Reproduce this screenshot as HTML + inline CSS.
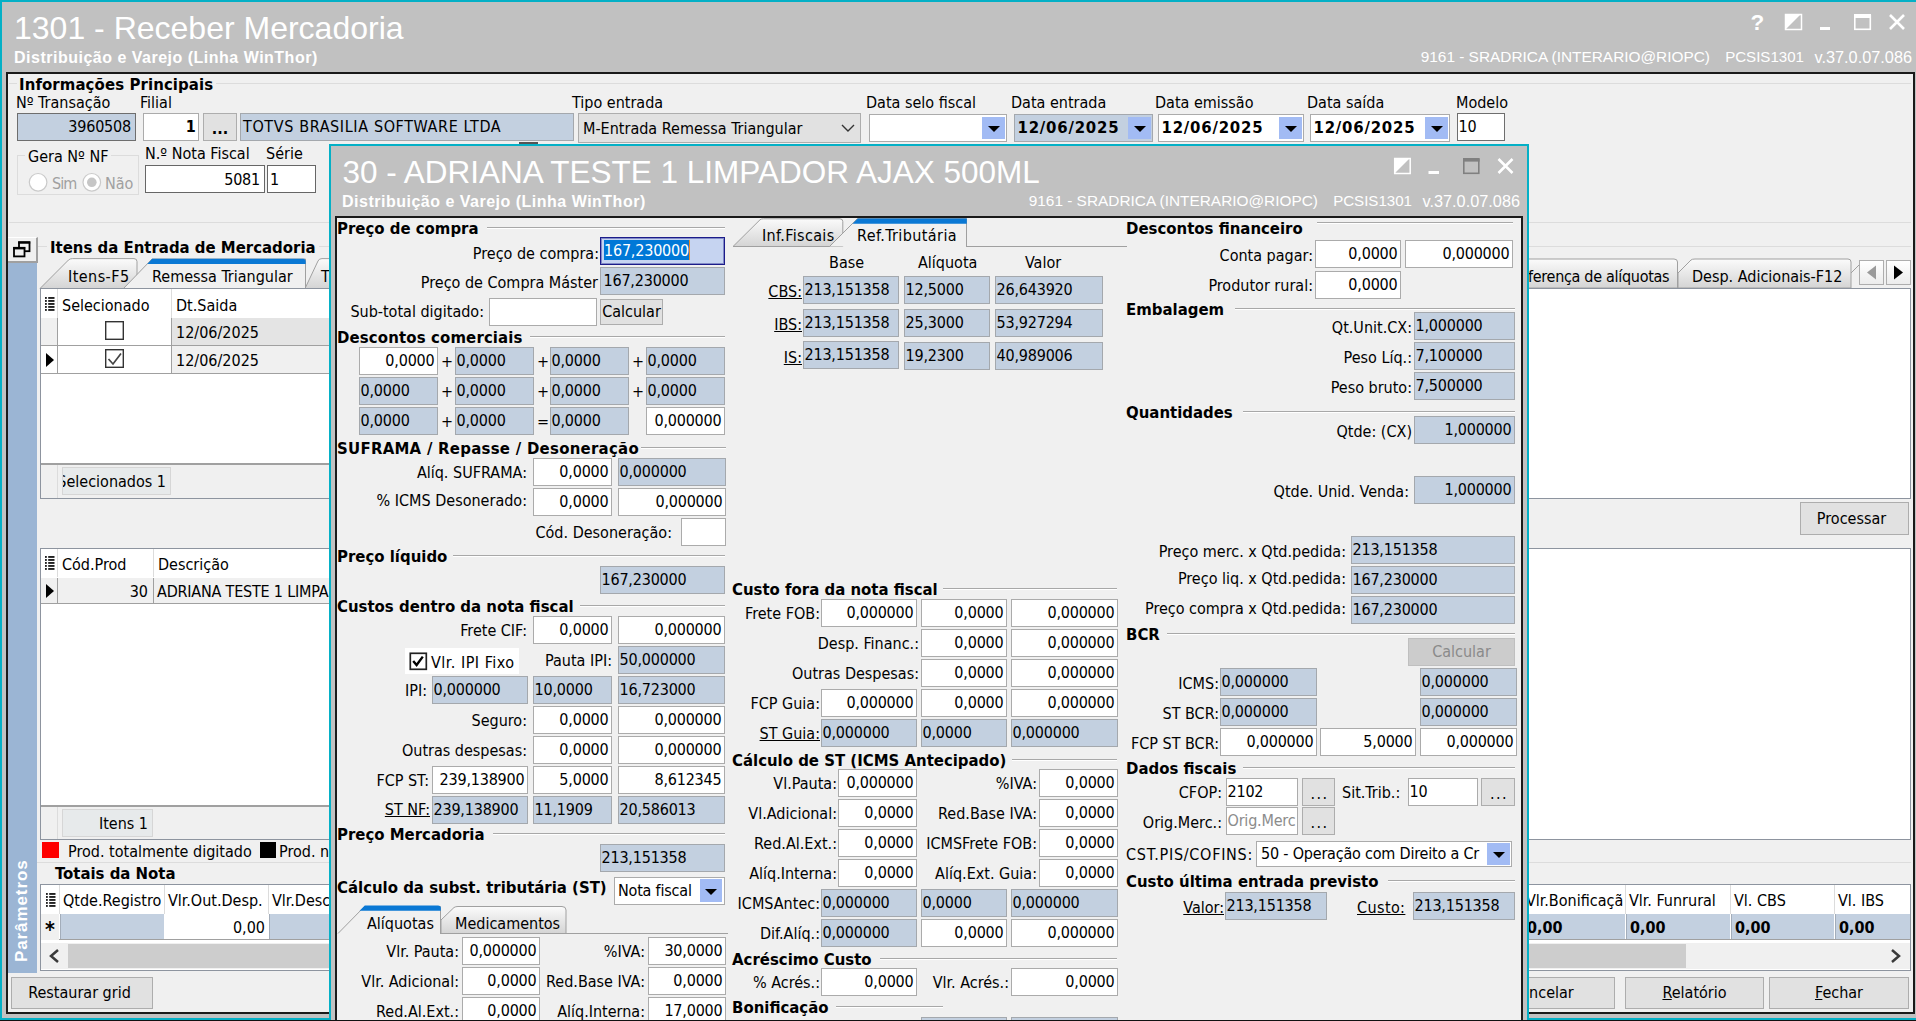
<!DOCTYPE html>
<html lang="pt-BR"><head><meta charset="utf-8"><title>1301 - Receber Mercadoria</title>
<style>
html,body{margin:0;padding:0}
body{width:1916px;height:1021px;overflow:hidden;position:relative;background:#c1c1c1;
 font-family:"DejaVu Sans Condensed","Liberation Sans",sans-serif;font-size:16px;color:#000}
body div{position:absolute;box-sizing:border-box;white-space:nowrap}
.teal{background:#04b0c6}
.panel{background:#f0f0f0;border:2px solid #1a1a1a}
.tt{font-family:"Liberation Sans",sans-serif;color:#fff;font-size:32px;line-height:36px}

.ts{font-family:"Liberation Sans",sans-serif;color:#fff;letter-spacing:.5px;font-size:16px;line-height:20px;font-weight:bold}
.tr{font-family:"Liberation Sans",sans-serif;color:#fff;font-size:15.6px;line-height:20px;text-align:right;white-space:pre}
.f{background:#fff;border:1px solid #ababab;padding:0 2px 0 .5px;overflow:hidden;letter-spacing:-.2px}
.f.b{background:#c3d0e0;border-color:#a4a8ad}
.f.r{text-align:right;padding-right:2.5px}
.f.bd{font-weight:bold}
.l{line-height:20px;height:20px}
.lr{text-align:right}
.u{text-decoration:underline}
.h{font-weight:bold;font-size:16.6px;line-height:22px;height:22px}
.gl{height:2px;border-top:1px solid #a8a8a8;border-bottom:1px solid #fff}
.bt{background:#e1e1e1;border:1px solid #adadad;text-align:center;overflow:hidden}
.dd{background:#a2bbf4}
.dd i{position:absolute;left:50%;top:50%;margin:-2px 0 0 -6px;width:0;height:0;border-left:6px solid transparent;border-right:6px solid transparent;border-top:6px solid #000}
.ln{background:#a0a0a0}
.w{background:#fff}
svg{position:absolute;overflow:visible}
.f.dt{font-size:16.6px;letter-spacing:.78px;padding-left:2.5px}

</style></head>
<body>
<div class="teal" style="left:0px;top:0px;width:1916px;height:2px;"></div>
<div class="teal" style="left:0px;top:0px;width:2px;height:1021px;"></div>
<div class="teal" style="left:0px;top:1018px;width:1916px;height:2px;"></div>
<div class="" style="left:0px;top:1020px;width:1916px;height:1px;background:#111;z-index:50"></div>
<div class="tt" style="left:14px;top:10px">1301 - Receber Mercadoria</div>
<div class="ts" style="left:14px;top:48px">Distribuição e Varejo (Linha WinThor)</div>
<div class="tr" style="left:1310px;width:400px;top:47px;font-size:15.4px">9161 - SRADRICA (INTERARIO@RIOPC)</div>
<div class="tr" style="left:1404px;width:400px;top:47px;font-size:15.1px">PCSIS1301</div>
<div class="tr" style="left:1512px;width:400px;top:47px;font-size:16.3px">v.37.0.07.086</div>
<svg style="left:1745px;top:10px" width="170" height="26" viewBox="1745 10 170 26">
<text x="1750.5" y="29.6" font-family="Liberation Sans, sans-serif" font-weight="bold" font-size="22.5" fill="#fff">?</text>
<rect x="1785.5" y="14.5" width="16" height="15" fill="none" stroke="#fff" stroke-width="1.5"/><path d="M1785 14h16l-16 16z" fill="#fff"/>
<rect x="1820" y="27" width="10" height="3" fill="#fff"/>
<rect x="1854.8" y="15.5" width="15.5" height="13.8" fill="none" stroke="#fff" stroke-width="1.6"/><rect x="1854" y="14" width="17" height="4" fill="#fff"/>
<path d="M1890 15l14 14M1904 15l-14 14" stroke="#fff" stroke-width="2.6" fill="none"/>
</svg>
<div class="panel" style="left:6px;top:72px;width:1909px;height:942px;"></div>
<div class="" style="left:9px;top:83px;width:1902px;height:1px;background:#dcdcdc"></div>
<div class="" style="left:9px;top:222px;width:1902px;height:1px;background:#dcdcdc"></div>
<div class="h" style="left:17px;top:74px;background:#f0f0f0;padding:0 3px 0 2px;letter-spacing:.1px">Informações Principais</div>
<div class="l " style="left:16px;top:93px;">Nº Transação</div>
<div class="l " style="left:140px;top:93px;">Filial</div>
<div class="l " style="left:572px;top:93px;">Tipo entrada</div>
<div class="l " style="left:866px;top:93px;">Data selo fiscal</div>
<div class="l " style="left:1011px;top:93px;">Data entrada</div>
<div class="l " style="left:1155px;top:93px;">Data emissão</div>
<div class="l " style="left:1307px;top:93px;">Data saída</div>
<div class="l " style="left:1456px;top:93px;">Modelo</div>
<div class="f b r " style="left:17px;top:113px;width:119px;height:28px;line-height:25px;border-color:#6e6e6e;padding-right:4px">3960508</div>
<div class="f r bd" style="left:143px;top:113px;width:56px;height:28px;line-height:25px;">1</div>
<div class="bt " style="left:203px;top:113px;width:34px;height:28px;line-height:26px;"><b style="position:relative;top:2px">...</b></div>
<div class="f b " style="left:240px;top:113px;width:334px;height:28px;line-height:25px;letter-spacing:.62px;padding-left:2px">TOTVS BRASILIA SOFTWARE LTDA</div>
<div class="bt" style="left:578px;top:113px;width:283px;height:30px;line-height:30px;text-align:left;padding-left:4px">M-Entrada Remessa Triangular</div>
<svg style="left:841px;top:124px" width="14" height="9"><path d="M1 1l6 6l6-6" stroke="#333" stroke-width="1.4" fill="none"/></svg>
<div class="f bd dt" style="left:869px;top:114px;width:138px;height:28px;line-height:25px;"></div>
<div class="dd " style="left:982px;top:117px;width:23px;height:22px"><i></i></div>
<div class="f b bd dt" style="left:1014px;top:114px;width:139px;height:28px;line-height:25px;">12/06/2025</div>
<div class="dd " style="left:1128px;top:117px;width:23px;height:22px"><i></i></div>
<div class="f bd dt" style="left:1158px;top:114px;width:146px;height:28px;line-height:25px;">12/06/2025</div>
<div class="dd " style="left:1279px;top:117px;width:23px;height:22px"><i></i></div>
<div class="f bd dt" style="left:1310px;top:114px;width:140px;height:28px;line-height:25px;">12/06/2025</div>
<div class="dd " style="left:1425px;top:117px;width:23px;height:22px"><i></i></div>
<div class="f " style="left:1457px;top:113px;width:48px;height:28px;line-height:25px;border-color:#6e6e6e">10</div>
<div class="" style="left:17px;top:155px;width:122px;height:40px;border:1px solid #dcdcdc"></div>
<div class="l" style="left:25px;top:147px;background:#f0f0f0;padding:0 3px">Gera Nº NF</div>
<svg style="left:28px;top:172px" width="80" height="22"><circle cx="10.1" cy="10.3" r="8.8" fill="#fff" stroke="#cacaca" stroke-width="1.2"/><circle cx="63.8" cy="10.3" r="8.8" fill="#fff" stroke="#cacaca" stroke-width="1.2"/><circle cx="63.8" cy="10.3" r="4.8" fill="#c6c6c6"/></svg>
<div class="l " style="left:52px;top:174px;color:#a0a0a0;letter-spacing:-.9px">Sim</div>
<div class="l " style="left:105px;top:174px;color:#a0a0a0">Não</div>
<div class="l " style="left:145px;top:144px;">N.º Nota Fiscal</div>
<div class="l " style="left:266px;top:144px;">Série</div>
<div class="f r " style="left:145px;top:165px;width:120px;height:28px;line-height:25px;border-color:#666;padding:1px 4px 0 0">5081</div>
<div class="f " style="left:267px;top:165px;width:49px;height:28px;line-height:25px;border-color:#666;padding-top:1px;padding-left:2px">1</div>
<div class="" style="left:519px;top:142px;width:19px;height:3px;background:#555"></div>
<div class="" style="left:37px;top:246px;width:1874px;height:1px;background:#dcdcdc"></div>
<div class="h" style="left:47px;top:237px;background:#f0f0f0;padding:0 3px">Itens da Entrada de Mercadoria</div>
<div class="" style="left:8px;top:237px;width:30px;height:26px;background:#f0f0f0;border-right:2px solid #a0a0a0;border-bottom:2px solid #a0a0a0;border-top:1px solid #fff"></div>
<svg style="left:13px;top:241px" width="20" height="18"><rect x="6" y="1.2" width="10.5" height="9" fill="none" stroke="#000" stroke-width="1.8"/><rect x="5.2" y="0.5" width="12" height="2.2" fill="#000"/><rect x="1" y="6.8" width="10.5" height="8.6" fill="#f0f0f0" stroke="#000" stroke-width="1.8"/><rect x="0.2" y="6" width="12" height="2.4" fill="#000"/></svg>
<div class="" style="left:8px;top:263px;width:29px;height:710px;background:#9bb5d4"></div>
<div style="left:-28px;top:902px;width:100px;height:20px;line-height:20px;transform:rotate(-90deg);color:#fff;font-weight:bold;font-family:'Liberation Sans',sans-serif;font-size:17px;text-align:center;letter-spacing:.9px">Parâmetros</div>
<svg style="left:38px;top:256px" width="300" height="34" viewBox="38 256 300 34">
<defs><linearGradient id="tg" x1="0" y1="0" x2="0" y2="1"><stop offset="0" stop-color="#fbfbfb"/><stop offset="1" stop-color="#d4d4d4"/></linearGradient></defs>
<path d="M40 288.5L68.5 260Q70 258.6 72.5 258.6H134Q137 258.6 137 261.6V288.5Z" fill="url(#tg)" stroke="#a0a0a0" stroke-width="1"/>
<path d="M305 288.5L318 261Q319 258.6 322 258.6H340V288.5Z" fill="url(#tg)" stroke="#a0a0a0" stroke-width="1"/>
<path d="M123.5 288.5L152 259H305.5V288.5Z" fill="#f0f0f0" stroke="#a0a0a0" stroke-width="1"/>
<path d="M147.3 263.9L152.2 258.8H303Q305.7 258.8 305.7 261.4V263.9Z" fill="#0a78d4"/>
</svg>
<div class="l " style="left:68px;top:267px;letter-spacing:.45px">Itens-F5</div>
<div class="l " style="left:152px;top:267px;">Remessa Triangular</div>
<div class="l " style="left:321px;top:267px;">T</div>
<svg style="left:1520px;top:256px" width="340" height="34" viewBox="1520 256 340 34">
<path d="M1520 259H1674Q1677.5 259 1677.5 262V288H1520Z" fill="url(#tg)" stroke="#a0a0a0"/>
<path d="M1678 288V273L1691 260Q1692 259 1695 259H1848Q1851 259 1851 262V288Z" fill="url(#tg)" stroke="#a0a0a0"/>
<path d="M1851 273L1859 265" stroke="#a0a0a0" fill="none"/>
</svg>
<div class="l " style="left:1528px;top:267px;letter-spacing:-.3px">ferença de alíquotas</div>
<div class="l " style="left:1692px;top:267px;">Desp. Adicionais-F12</div>
<div class="" style="left:1859px;top:260px;width:25px;height:25px;background:linear-gradient(#fff,#ececec);border:1px solid #adadad"></div>
<div class="" style="left:1886px;top:260px;width:25px;height:25px;background:linear-gradient(#fff,#ececec);border:1px solid #adadad"></div>
<svg style="left:1859px;top:259px" width="52" height="27"><path d="M17 6.5v14l-9-7z" fill="#9a9a9a"/><path d="M35 6.5v14l9-7z" fill="#000"/></svg>
<div class="w" style="left:40px;top:288px;width:1871px;height:211px;border:1px solid #8d949f"></div>
<div class="" style="left:41px;top:318px;width:1488px;height:28px;background:#e4e4e4"></div>
<div class="" style="left:41px;top:346px;width:1488px;height:28px;background:#f0f0f0"></div>
<div class="" style="left:41px;top:318px;width:16px;height:28px;background:#f0f0f0"></div>
<div class="w" style="left:41px;top:346px;width:16px;height:28px;"></div>
<div class="w" style="left:58px;top:318px;width:113px;height:56px;"></div>
<div class="" style="left:57px;top:289px;width:1px;height:29px;background:#dcdcdc"></div>
<div class="" style="left:171px;top:289px;width:1px;height:29px;background:#dcdcdc"></div>
<div class="ln" style="left:57px;top:318px;width:1px;height:56px;"></div>
<div class="ln" style="left:171px;top:318px;width:1px;height:56px;"></div>
<div class="ln" style="left:41px;top:345px;width:1488px;height:1px;"></div>
<div class="ln" style="left:41px;top:373px;width:1488px;height:1px;"></div>
<svg style="left:45px;top:297px" width="12" height="16"><rect x="0" y="0" width="1.8" height="1.9" fill="#222"/><rect x="3.2" y="0" width="6.3" height="1.9" fill="#222"/><rect x="0" y="3" width="1.8" height="1.9" fill="#222"/><rect x="3.2" y="3" width="6.3" height="1.9" fill="#222"/><rect x="0" y="6" width="1.8" height="1.9" fill="#222"/><rect x="3.2" y="6" width="6.3" height="1.9" fill="#222"/><rect x="0" y="9" width="1.8" height="1.9" fill="#222"/><rect x="3.2" y="9" width="6.3" height="1.9" fill="#222"/><rect x="0" y="12" width="1.8" height="1.9" fill="#222"/><rect x="3.2" y="12" width="6.3" height="1.9" fill="#222"/></svg>
<div class="l " style="left:62px;top:296px;">Selecionado</div>
<div class="l " style="left:176px;top:296px;">Dt.Saida</div>
<div class="l " style="left:176px;top:323px;">12/06/2025</div>
<div class="l " style="left:176px;top:351px;">12/06/2025</div>
<svg style="left:104px;top:320px" width="22" height="50"><rect x="1.7" y="1.7" width="17.6" height="17.6" fill="#fff" stroke="#333" stroke-width="1.4"/><rect x="1.7" y="29.7" width="17.6" height="17.6" fill="#fff" stroke="#333" stroke-width="1.4"/><path d="M4.5 39l4.5 5l8-10.5" fill="none" stroke="#444" stroke-width="1.7"/></svg>
<svg style="left:45px;top:352px" width="10" height="16"><path d="M1 1v14l8-7z" fill="#000"/></svg>
<div class="" style="left:41px;top:463px;width:1488px;height:35px;background:#f0f0f0;border-top:2px solid #a0a0a0"></div>
<div class="" style="left:57px;top:465px;width:1px;height:33px;background:#dcdcdc"></div>
<div class="" style="left:62px;top:467px;width:109px;height:28px;background:#e7eaeb;border:1px solid #d6d6d6;overflow:hidden;text-align:right;line-height:27px;padding-right:4px"><span style="margin-left:-20px">Selecionados 1</span></div>
<div class="bt " style="left:1800px;top:502px;width:109px;height:33px;line-height:31px;padding-right:6px">Processar</div>
<div class="w" style="left:40px;top:548px;width:1871px;height:292px;border:1px solid #8d949f"></div>
<div class="" style="left:57px;top:549px;width:1px;height:28px;background:#dcdcdc"></div>
<div class="" style="left:153px;top:549px;width:1px;height:28px;background:#dcdcdc"></div>
<svg style="left:45px;top:556px" width="12" height="16"><rect x="0" y="0" width="1.8" height="1.9" fill="#222"/><rect x="3.2" y="0" width="6.3" height="1.9" fill="#222"/><rect x="0" y="3" width="1.8" height="1.9" fill="#222"/><rect x="3.2" y="3" width="6.3" height="1.9" fill="#222"/><rect x="0" y="6" width="1.8" height="1.9" fill="#222"/><rect x="3.2" y="6" width="6.3" height="1.9" fill="#222"/><rect x="0" y="9" width="1.8" height="1.9" fill="#222"/><rect x="3.2" y="9" width="6.3" height="1.9" fill="#222"/><rect x="0" y="12" width="1.8" height="1.9" fill="#222"/><rect x="3.2" y="12" width="6.3" height="1.9" fill="#222"/></svg>
<div class="l " style="left:62px;top:555px;">Cód.Prod</div>
<div class="l " style="left:158px;top:555px;">Descrição</div>
<div class="" style="left:41px;top:578px;width:1488px;height:26px;background:#f0f0f0"></div>
<div class="ln" style="left:57px;top:578px;width:1px;height:26px;"></div>
<div class="ln" style="left:153px;top:578px;width:1px;height:26px;"></div>
<div class="ln" style="left:41px;top:603px;width:1488px;height:1px;"></div>
<div class="l lr " style="left:-252px;width:400px;top:582px;">30</div>
<div class="l " style="left:157px;top:582px;letter-spacing:-.2px">ADRIANA TESTE 1 LIMPADOR AJAX 500ML</div>
<svg style="left:45px;top:583px" width="10" height="16"><path d="M1 1v14l8-7z" fill="#000"/></svg>
<div class="" style="left:41px;top:805px;width:1488px;height:34px;background:#f0f0f0;border-top:2px solid #a0a0a0"></div>
<div class="" style="left:57px;top:807px;width:1px;height:32px;background:#dcdcdc"></div>
<div class="" style="left:62px;top:809px;width:91px;height:28px;background:#e7eaeb;border:1px solid #d6d6d6;text-align:right;line-height:27px;padding-right:4px">Itens 1</div>
<div class="" style="left:42px;top:842px;width:17px;height:16px;background:#fe0000"></div>
<div class="" style="left:260px;top:842px;width:16px;height:16px;background:#000"></div>
<div class="l " style="left:68px;top:842px;">Prod. totalmente digitado</div>
<div class="l " style="left:279px;top:842px;">Prod. não digitado</div>
<div class="" style="left:37px;top:862px;width:1874px;height:1px;background:#dcdcdc"></div>
<div class="h" style="left:52px;top:863px;background:#f0f0f0;padding:0 3px">Totais da Nota</div>
<div class="w" style="left:40px;top:884px;width:1871px;height:87px;border:1px solid #8d949f"></div>
<svg style="left:46px;top:893px" width="12" height="16"><rect x="0" y="0" width="1.8" height="1.9" fill="#222"/><rect x="3.2" y="0" width="6.3" height="1.9" fill="#222"/><rect x="0" y="3" width="1.8" height="1.9" fill="#222"/><rect x="3.2" y="3" width="6.3" height="1.9" fill="#222"/><rect x="0" y="6" width="1.8" height="1.9" fill="#222"/><rect x="3.2" y="6" width="6.3" height="1.9" fill="#222"/><rect x="0" y="9" width="1.8" height="1.9" fill="#222"/><rect x="3.2" y="9" width="6.3" height="1.9" fill="#222"/><rect x="0" y="12" width="1.8" height="1.9" fill="#222"/><rect x="3.2" y="12" width="6.3" height="1.9" fill="#222"/></svg>
<div class="" style="left:59px;top:885px;width:1px;height:29px;background:#dcdcdc"></div>
<div class="" style="left:60px;top:886px;width:104px;height:27px;overflow:hidden;line-height:29px;padding-left:3px">Qtde.Registro</div>
<div class="" style="left:60px;top:914px;width:104px;height:26px;background:#c3d0e0;border-left:1px solid #a3adba;font-weight:bold;line-height:28px;padding-left:3px"></div>
<div class="" style="left:164px;top:885px;width:1px;height:29px;background:#dcdcdc"></div>
<div class="" style="left:165px;top:886px;width:103px;height:27px;overflow:hidden;line-height:29px;padding-left:3px">Vlr.Out.Desp.</div>
<div class="" style="left:165px;top:914px;width:103px;height:26px;text-align:right;line-height:28px;padding-right:3px">0,00</div>
<div class="" style="left:268px;top:885px;width:1px;height:29px;background:#dcdcdc"></div>
<div class="" style="left:269px;top:886px;width:104px;height:27px;overflow:hidden;line-height:29px;padding-left:3px">Vlr.Desc</div>
<div class="" style="left:269px;top:914px;width:104px;height:26px;background:#c3d0e0;border-left:1px solid #a3adba;font-weight:bold;line-height:28px;padding-left:3px"></div>
<div class="" style="left:373px;top:885px;width:1px;height:29px;background:#dcdcdc"></div>
<div class="" style="left:374px;top:914px;width:103px;height:26px;background:#c3d0e0;border-left:1px solid #a3adba;font-weight:bold;line-height:28px;padding-left:3px"></div>
<div class="" style="left:477px;top:885px;width:1px;height:29px;background:#dcdcdc"></div>
<div class="" style="left:478px;top:914px;width:104px;height:26px;background:#c3d0e0;border-left:1px solid #a3adba;font-weight:bold;line-height:28px;padding-left:3px"></div>
<div class="" style="left:582px;top:885px;width:1px;height:29px;background:#dcdcdc"></div>
<div class="" style="left:583px;top:914px;width:103px;height:26px;background:#c3d0e0;border-left:1px solid #a3adba;font-weight:bold;line-height:28px;padding-left:3px"></div>
<div class="" style="left:686px;top:885px;width:1px;height:29px;background:#dcdcdc"></div>
<div class="" style="left:687px;top:914px;width:104px;height:26px;background:#c3d0e0;border-left:1px solid #a3adba;font-weight:bold;line-height:28px;padding-left:3px"></div>
<div class="" style="left:791px;top:885px;width:1px;height:29px;background:#dcdcdc"></div>
<div class="" style="left:792px;top:914px;width:103px;height:26px;background:#c3d0e0;border-left:1px solid #a3adba;font-weight:bold;line-height:28px;padding-left:3px"></div>
<div class="" style="left:895px;top:885px;width:1px;height:29px;background:#dcdcdc"></div>
<div class="" style="left:896px;top:914px;width:104px;height:26px;background:#c3d0e0;border-left:1px solid #a3adba;font-weight:bold;line-height:28px;padding-left:3px"></div>
<div class="" style="left:1000px;top:885px;width:1px;height:29px;background:#dcdcdc"></div>
<div class="" style="left:1001px;top:914px;width:103px;height:26px;background:#c3d0e0;border-left:1px solid #a3adba;font-weight:bold;line-height:28px;padding-left:3px"></div>
<div class="" style="left:1104px;top:885px;width:1px;height:29px;background:#dcdcdc"></div>
<div class="" style="left:1105px;top:914px;width:104px;height:26px;background:#c3d0e0;border-left:1px solid #a3adba;font-weight:bold;line-height:28px;padding-left:3px"></div>
<div class="" style="left:1209px;top:885px;width:1px;height:29px;background:#dcdcdc"></div>
<div class="" style="left:1210px;top:914px;width:103px;height:26px;background:#c3d0e0;border-left:1px solid #a3adba;font-weight:bold;line-height:28px;padding-left:3px"></div>
<div class="" style="left:1313px;top:885px;width:1px;height:29px;background:#dcdcdc"></div>
<div class="" style="left:1314px;top:914px;width:104px;height:26px;background:#c3d0e0;border-left:1px solid #a3adba;font-weight:bold;line-height:28px;padding-left:3px"></div>
<div class="" style="left:1418px;top:885px;width:1px;height:29px;background:#dcdcdc"></div>
<div class="" style="left:1419px;top:914px;width:103px;height:26px;background:#c3d0e0;border-left:1px solid #a3adba;font-weight:bold;line-height:28px;padding-left:3px"></div>
<div class="" style="left:1522px;top:885px;width:1px;height:29px;background:#dcdcdc"></div>
<div class="" style="left:1523px;top:886px;width:102px;height:27px;overflow:hidden;line-height:29px;padding-left:3px">Vlr.Bonificaçã</div>
<div class="" style="left:1523px;top:914px;width:102px;height:26px;background:#c3d0e0;border-left:1px solid #a3adba;font-weight:bold;line-height:28px;padding-left:3px">0,00</div>
<div class="" style="left:1625px;top:885px;width:1px;height:29px;background:#dcdcdc"></div>
<div class="" style="left:1626px;top:886px;width:104px;height:27px;overflow:hidden;line-height:29px;padding-left:3px">Vlr. Funrural</div>
<div class="" style="left:1626px;top:914px;width:104px;height:26px;background:#c3d0e0;border-left:1px solid #a3adba;font-weight:bold;line-height:28px;padding-left:3px">0,00</div>
<div class="" style="left:1730px;top:885px;width:1px;height:29px;background:#dcdcdc"></div>
<div class="" style="left:1731px;top:886px;width:103px;height:27px;overflow:hidden;line-height:29px;padding-left:3px">Vl. CBS</div>
<div class="" style="left:1731px;top:914px;width:103px;height:26px;background:#c3d0e0;border-left:1px solid #a3adba;font-weight:bold;line-height:28px;padding-left:3px">0,00</div>
<div class="" style="left:1834px;top:885px;width:1px;height:29px;background:#dcdcdc"></div>
<div class="" style="left:1835px;top:886px;width:75px;height:27px;overflow:hidden;line-height:29px;padding-left:3px">Vl. IBS</div>
<div class="" style="left:1835px;top:914px;width:75px;height:26px;background:#c3d0e0;border-left:1px solid #a3adba;font-weight:bold;line-height:28px;padding-left:3px">0,00</div>
<div class="ln" style="left:41px;top:939px;width:1869px;height:1px;"></div>
<div class="" style="left:41px;top:914px;width:18px;height:26px;background:#f0f0f0"></div>
<div class="l " style="left:45px;top:920px;font-size:21px;font-weight:bold">*</div>
<div class="" style="left:41px;top:943px;width:1869px;height:26px;background:#f0f0f0"></div>
<div class="" style="left:68px;top:944px;width:1618px;height:24px;background:#cdcdcd"></div>
<svg style="left:48px;top:948px" width="1860" height="16"><path d="M10 2l-7 6l7 6" stroke="#3a3a3a" stroke-width="2.5" fill="none"/><path d="M1844 2l7 6l-7 6" stroke="#3a3a3a" stroke-width="2.5" fill="none"/></svg>
<div class="bt " style="left:11px;top:977px;width:142px;height:32px;line-height:30px;padding-right:5px">Restaurar grid</div>
<div class="bt " style="left:1475px;top:977px;width:140px;height:32px;line-height:30px;padding-right:6px"><span class="u">C</span>ancelar</div>
<div class="bt " style="left:1625px;top:977px;width:139px;height:32px;line-height:30px;"><span class="u">R</span>elatório</div>
<div class="bt " style="left:1769px;top:977px;width:140px;height:32px;line-height:30px;"><span class="u">F</span>echar</div>
<div class="teal" style="left:329px;top:144px;width:1200px;height:876px;"></div>
<div class="" style="left:331px;top:146px;width:1196px;height:874px;background:#c1c1c1"></div>
<div class="tt" style="left:342.5px;top:154px;font-size:31.5px">30 - ADRIANA TESTE 1 LIMPADOR AJAX 500ML</div>
<div class="ts" style="left:342px;top:192px">Distribuição e Varejo (Linha WinThor)</div>
<div class="tr" style="left:918px;width:400px;top:191px;font-size:15.4px">9161 - SRADRICA (INTERARIO@RIOPC)</div>
<div class="tr" style="left:1012px;width:400px;top:191px;font-size:15.1px">PCSIS1301</div>
<div class="tr" style="left:1120px;width:400px;top:191px;font-size:16.3px">v.37.0.07.086</div>
<svg style="left:1390px;top:154px" width="130" height="24" viewBox="1390 154 130 24">
<rect x="1394.7" y="158.5" width="15.5" height="15" fill="none" stroke="#fff" stroke-width="1.5"/><path d="M1394 158h16l-16 16z" fill="#fff"/>
<rect x="1428.5" y="171" width="10.5" height="3" fill="#fff"/>
<rect x="1463.8" y="159.5" width="15" height="13.8" fill="none" stroke="#808080" stroke-width="1.6"/><rect x="1463" y="158" width="16.6" height="3.6" fill="#808080"/>
<path d="M1498.5 159l14 14M1512.5 159l-14 14" stroke="#fff" stroke-width="2.6" fill="none"/>
</svg>
<div class="panel" style="left:335px;top:216px;width:1188px;height:804px;border-bottom:none"></div>
<div class="h" style="left:337px;top:218px;">Preço de compra</div>
<div class="gl" style="left:487px;top:227px;width:238px"></div>
<div class="l lr " style="left:199px;width:400px;top:244px;">Preço de compra:</div>
<div class="f" style="left:600px;top:237px;width:125px;height:28px;line-height:24px;background:#c6d4f1;border:1px solid #1c1c8a;box-shadow:inset 0 0 0 1px rgba(28,28,138,.4);padding:0 3px"><span style="background:#0078d7;color:#fff;display:inline-block;height:20px;line-height:22px;margin-top:2px;border-right:1.5px solid #e8892a;vertical-align:top">167,230000</span></div>
<div class="l lr " style="left:198px;width:400px;top:273px;">Preço de Compra Máster</div>
<div class="f b " style="left:600px;top:267px;width:125px;height:28px;line-height:25px;padding-left:2.5px">167,230000</div>
<div class="l lr " style="left:84px;width:400px;top:302px;">Sub-total digitado:</div>
<div class="f " style="left:489px;top:298px;width:108px;height:28px;line-height:25px;"></div>
<div class="bt " style="left:600px;top:299px;width:63px;height:26px;line-height:24px;">Calcular</div>
<div class="h" style="left:337px;top:327px;"><span style="letter-spacing:.14px">Descontos comerciais</span></div>
<div class="gl" style="left:530px;top:336px;width:195px"></div>
<div class="f r " style="left:359px;top:347px;width:79px;height:28px;line-height:25px;">0,0000</div>
<div class="f b " style="left:455px;top:347px;width:79px;height:28px;line-height:25px;">0,0000</div>
<div class="f b " style="left:550px;top:347px;width:79px;height:28px;line-height:25px;">0,0000</div>
<div class="f b " style="left:646px;top:347px;width:79px;height:28px;line-height:25px;">0,0000</div>
<div class="l " style="left:441px;top:352px;">+</div>
<div class="l " style="left:537px;top:352px;">+</div>
<div class="l " style="left:632px;top:352px;">+</div>
<div class="f b " style="left:359px;top:377px;width:79px;height:28px;line-height:25px;">0,0000</div>
<div class="f b " style="left:455px;top:377px;width:79px;height:28px;line-height:25px;">0,0000</div>
<div class="f b " style="left:550px;top:377px;width:79px;height:28px;line-height:25px;">0,0000</div>
<div class="f b " style="left:646px;top:377px;width:79px;height:28px;line-height:25px;">0,0000</div>
<div class="l " style="left:441px;top:382px;">+</div>
<div class="l " style="left:537px;top:382px;">+</div>
<div class="l " style="left:632px;top:382px;">+</div>
<div class="f b " style="left:359px;top:407px;width:79px;height:28px;line-height:25px;">0,0000</div>
<div class="f b " style="left:455px;top:407px;width:79px;height:28px;line-height:25px;">0,0000</div>
<div class="f b " style="left:550px;top:407px;width:79px;height:28px;line-height:25px;">0,0000</div>
<div class="f r " style="left:646px;top:407px;width:79px;height:28px;line-height:25px;">0,000000</div>
<div class="l " style="left:441px;top:412px;">+</div>
<div class="l " style="left:537px;top:412px;">=</div>
<div class="h" style="left:337px;top:438px;"><span style="letter-spacing:.27px">SUFRAMA / Repasse / Desoneração</span></div>
<div class="gl" style="left:641px;top:447px;width:85px"></div>
<div class="l lr " style="left:127px;width:400px;top:463px;">Alíq. SUFRAMA:</div>
<div class="f r " style="left:533px;top:458px;width:79px;height:28px;line-height:25px;">0,0000</div>
<div class="f b " style="left:618px;top:458px;width:108px;height:28px;line-height:25px;">0,000000</div>
<div class="l lr " style="left:127px;width:400px;top:491px;">% ICMS Desonerado:</div>
<div class="f r " style="left:533px;top:488px;width:79px;height:28px;line-height:25px;">0,0000</div>
<div class="f r " style="left:618px;top:488px;width:108px;height:28px;line-height:25px;">0,000000</div>
<div class="l lr " style="left:272px;width:400px;top:523px;">Cód. Desoneração:</div>
<div class="f " style="left:681px;top:518px;width:45px;height:28px;line-height:25px;"></div>
<div class="h" style="left:337px;top:546px;">Preço líquido</div>
<div class="gl" style="left:453px;top:555px;width:272px"></div>
<div class="f b " style="left:600px;top:566px;width:125px;height:28px;line-height:25px;">167,230000</div>
<div class="h" style="left:337px;top:596px;">Custos dentro da nota fiscal</div>
<div class="gl" style="left:580px;top:605px;width:145px"></div>
<div class="l lr " style="left:127px;width:400px;top:621px;">Frete CIF:</div>
<div class="f r " style="left:533px;top:616px;width:79px;height:28px;line-height:25px;">0,0000</div>
<div class="f r " style="left:618px;top:616px;width:107px;height:28px;line-height:25px;">0,000000</div>
<div class="w" style="left:405px;top:648px;width:114px;height:26px;"></div>
<svg style="left:409px;top:652px" width="19" height="19"><rect x="1.3" y="1.3" width="16" height="16" fill="#fff" stroke="#222" stroke-width="1.7"/><path d="M4.2 9l3.4 4l6.2-8.4" fill="none" stroke="#000" stroke-width="2.4"/></svg>
<div class="l " style="left:431px;top:653px;letter-spacing:.5px">Vlr. IPI Fixo</div>
<div class="l lr " style="left:212px;width:400px;top:651px;">Pauta IPI:</div>
<div class="f b " style="left:618px;top:646px;width:107px;height:28px;line-height:25px;">50,000000</div>
<div class="l lr " style="left:27px;width:400px;top:681px;">IPI:</div>
<div class="f b " style="left:432px;top:676px;width:96px;height:28px;line-height:25px;">0,000000</div>
<div class="f b " style="left:533px;top:676px;width:79px;height:28px;line-height:25px;">10,0000</div>
<div class="f b " style="left:618px;top:676px;width:107px;height:28px;line-height:25px;">16,723000</div>
<div class="l lr " style="left:127px;width:400px;top:711px;">Seguro:</div>
<div class="f r " style="left:533px;top:706px;width:79px;height:28px;line-height:25px;">0,0000</div>
<div class="f r " style="left:618px;top:706px;width:107px;height:28px;line-height:25px;">0,000000</div>
<div class="l lr " style="left:127px;width:400px;top:741px;">Outras despesas:</div>
<div class="f r " style="left:533px;top:736px;width:79px;height:28px;line-height:25px;">0,0000</div>
<div class="f r " style="left:618px;top:736px;width:107px;height:28px;line-height:25px;">0,000000</div>
<div class="l lr " style="left:29px;width:400px;top:771px;">FCP ST:</div>
<div class="f r " style="left:432px;top:766px;width:96px;height:28px;line-height:25px;">239,138900</div>
<div class="f r " style="left:533px;top:766px;width:79px;height:28px;line-height:25px;">5,0000</div>
<div class="f r " style="left:618px;top:766px;width:107px;height:28px;line-height:25px;">8,612345</div>
<div class="l lr " style="left:30px;width:400px;top:800px;"><span class="u">ST NF:</span></div>
<div class="f b " style="left:432px;top:796px;width:96px;height:28px;line-height:25px;">239,138900</div>
<div class="f b " style="left:533px;top:796px;width:79px;height:28px;line-height:25px;">11,1909</div>
<div class="f b " style="left:618px;top:796px;width:107px;height:28px;line-height:25px;">20,586013</div>
<div class="h" style="left:337px;top:824px;">Preço Mercadoria</div>
<div class="gl" style="left:493px;top:833px;width:232px"></div>
<div class="f b " style="left:600px;top:844px;width:125px;height:28px;line-height:25px;">213,151358</div>
<div class="h" style="left:337px;top:877px;">Cálculo da subst. tributária (ST)</div>
<div class="f " style="left:614px;top:877px;width:111px;height:28px;line-height:25px;padding-left:3px">Nota fiscal</div>
<div class="dd " style="left:700px;top:879px;width:22px;height:23px"><i></i></div>
<svg style="left:336px;top:900px" width="400" height="38" viewBox="336 900 400 38">
<path d="M441 933.5V920L454 907.5Q455.5 906.5 458 906.5H562Q566 906.5 566 910V933.5Z" fill="url(#tg)" stroke="#a0a0a0"/>
<path d="M338 933.5L364.5 906.5H440.5V933.5" fill="#f0f0f0" stroke="#a0a0a0"/>
<path d="M440 933.5H728" stroke="#a0a0a0" fill="none"/>
<path d="M359.6 910.7L364.8 905.5H438Q440.8 905.5 440.8 908V910.7Z" fill="#0a78d4"/>
</svg>
<div class="l " style="left:367px;top:914px;">Alíquotas</div>
<div class="l " style="left:455px;top:914px;">Medicamentos</div>
<div class="l lr " style="left:59px;width:400px;top:942px;">Vlr. Pauta:</div>
<div class="f r " style="left:462px;top:937px;width:78px;height:28px;line-height:25px;">0,000000</div>
<div class="l lr " style="left:245px;width:400px;top:942px;">%IVA:</div>
<div class="f r " style="left:648px;top:937px;width:78px;height:28px;line-height:25px;">30,0000</div>
<div class="l lr " style="left:59px;width:400px;top:972px;">Vlr. Adicional:</div>
<div class="f r " style="left:462px;top:967px;width:78px;height:28px;line-height:25px;">0,0000</div>
<div class="l lr " style="left:245px;width:400px;top:972px;">Red.Base IVA:</div>
<div class="f r " style="left:648px;top:967px;width:78px;height:28px;line-height:25px;">0,0000</div>
<div class="l lr " style="left:59px;width:400px;top:1002px;">Red.Al.Ext.:</div>
<div class="f r " style="left:462px;top:997px;width:78px;height:28px;line-height:25px;">0,0000</div>
<div class="l lr " style="left:245px;width:400px;top:1002px;">Alíq.Interna:</div>
<div class="f r " style="left:648px;top:997px;width:78px;height:28px;line-height:25px;">17,0000</div>
<svg style="left:730px;top:216px" width="400" height="34" viewBox="730 216 400 34">
<path d="M733 246.5L760 219.8Q761.2 218.8 763.5 218.8H840Q842.8 218.8 842.8 221.6V246.5Z" fill="url(#tg)" stroke="#a0a0a0"/>
<path d="M829.5 246.5L857.5 218.5H966.5V246.5" fill="#f0f0f0" stroke="#a0a0a0"/>
<path d="M966 246.5H1127" stroke="#a0a0a0" fill="none"/>
<path d="M852.6 223.7L857.8 218.5H966.8V223.7Z" fill="#0a78d4"/>
</svg>
<div class="l " style="left:762px;top:226px;letter-spacing:.35px">Inf.Fiscais</div>
<div class="l " style="left:857px;top:226px;letter-spacing:.4px">Ref.Tributária</div>
<div class="l " style="left:829px;top:253px;">Base</div>
<div class="l " style="left:918px;top:253px;">Alíquota</div>
<div class="l " style="left:1025px;top:253px;">Valor</div>
<div class="l lr " style="left:402px;width:400px;top:282px;"><span class="u">CBS:</span></div>
<div class="f b " style="left:803px;top:276px;width:96px;height:28px;line-height:25px;">213,151358</div>
<div class="f b " style="left:904px;top:276px;width:86px;height:28px;line-height:25px;">12,5000</div>
<div class="f b " style="left:995px;top:276px;width:108px;height:28px;line-height:25px;">26,643920</div>
<div class="l lr " style="left:402px;width:400px;top:315px;"><span class="u">IBS:</span></div>
<div class="f b " style="left:803px;top:309px;width:96px;height:28px;line-height:25px;">213,151358</div>
<div class="f b " style="left:904px;top:309px;width:86px;height:28px;line-height:25px;">25,3000</div>
<div class="f b " style="left:995px;top:309px;width:108px;height:28px;line-height:25px;">53,927294</div>
<div class="l lr " style="left:402px;width:400px;top:348px;"><span class="u">IS:</span></div>
<div class="f b " style="left:803px;top:341px;width:96px;height:28px;line-height:25px;">213,151358</div>
<div class="f b " style="left:904px;top:342px;width:86px;height:28px;line-height:25px;">19,2300</div>
<div class="f b " style="left:995px;top:342px;width:108px;height:28px;line-height:25px;">40,989006</div>
<div class="h" style="left:732px;top:579px;">Custo fora da nota fiscal</div>
<div class="gl" style="left:943px;top:588px;width:174px"></div>
<div class="l lr " style="left:420px;width:400px;top:604px;">Frete FOB:</div>
<div class="f r " style="left:821px;top:599px;width:96px;height:28px;line-height:25px;">0,000000</div>
<div class="f r " style="left:921px;top:599px;width:86px;height:28px;line-height:25px;">0,0000</div>
<div class="f r " style="left:1011px;top:599px;width:107px;height:28px;line-height:25px;">0,000000</div>
<div class="l lr " style="left:519px;width:400px;top:634px;">Desp. Financ.:</div>
<div class="f r " style="left:921px;top:629px;width:86px;height:28px;line-height:25px;">0,0000</div>
<div class="f r " style="left:1011px;top:629px;width:107px;height:28px;line-height:25px;">0,000000</div>
<div class="l lr " style="left:519px;width:400px;top:664px;">Outras Despesas:</div>
<div class="f r " style="left:921px;top:659px;width:86px;height:28px;line-height:25px;">0,0000</div>
<div class="f r " style="left:1011px;top:659px;width:107px;height:28px;line-height:25px;">0,000000</div>
<div class="l lr " style="left:420px;width:400px;top:694px;">FCP Guia:</div>
<div class="f r " style="left:821px;top:689px;width:96px;height:28px;line-height:25px;">0,000000</div>
<div class="f r " style="left:921px;top:689px;width:86px;height:28px;line-height:25px;">0,0000</div>
<div class="f r " style="left:1011px;top:689px;width:107px;height:28px;line-height:25px;">0,000000</div>
<div class="l lr " style="left:420px;width:400px;top:724px;"><span class="u">ST Guia:</span></div>
<div class="f b " style="left:821px;top:719px;width:96px;height:28px;line-height:25px;">0,000000</div>
<div class="f b " style="left:921px;top:719px;width:86px;height:28px;line-height:25px;">0,0000</div>
<div class="f b " style="left:1011px;top:719px;width:107px;height:28px;line-height:25px;">0,000000</div>
<div class="h" style="left:732px;top:750px;">Cálculo de ST (ICMS Antecipado)</div>
<div class="gl" style="left:1012px;top:759px;width:105px"></div>
<div class="l lr " style="left:437px;width:400px;top:774px;">Vl.Pauta:</div>
<div class="f r " style="left:838px;top:769px;width:79px;height:28px;line-height:25px;">0,000000</div>
<div class="l lr " style="left:637px;width:400px;top:774px;">%IVA:</div>
<div class="f r " style="left:1039px;top:769px;width:79px;height:28px;line-height:25px;">0,0000</div>
<div class="l lr " style="left:437px;width:400px;top:804px;">Vl.Adicional:</div>
<div class="f r " style="left:838px;top:799px;width:79px;height:28px;line-height:25px;">0,0000</div>
<div class="l lr " style="left:637px;width:400px;top:804px;">Red.Base IVA:</div>
<div class="f r " style="left:1039px;top:799px;width:79px;height:28px;line-height:25px;">0,0000</div>
<div class="l lr " style="left:437px;width:400px;top:834px;">Red.Al.Ext.:</div>
<div class="f r " style="left:838px;top:829px;width:79px;height:28px;line-height:25px;">0,0000</div>
<div class="l lr " style="left:637px;width:400px;top:834px;">ICMSFrete FOB:</div>
<div class="f r " style="left:1039px;top:829px;width:79px;height:28px;line-height:25px;">0,0000</div>
<div class="l lr " style="left:437px;width:400px;top:864px;">Alíq.Interna:</div>
<div class="f r " style="left:838px;top:859px;width:79px;height:28px;line-height:25px;">0,0000</div>
<div class="l lr " style="left:637px;width:400px;top:864px;">Alíq.Ext. Guia:</div>
<div class="f r " style="left:1039px;top:859px;width:79px;height:28px;line-height:25px;">0,0000</div>
<div class="l lr " style="left:420px;width:400px;top:894px;">ICMSAntec:</div>
<div class="f b " style="left:821px;top:889px;width:96px;height:28px;line-height:25px;">0,000000</div>
<div class="f b " style="left:921px;top:889px;width:86px;height:28px;line-height:25px;">0,0000</div>
<div class="f b " style="left:1011px;top:889px;width:107px;height:28px;line-height:25px;">0,000000</div>
<div class="l lr " style="left:420px;width:400px;top:924px;">Dif.Alíq.:</div>
<div class="f b " style="left:821px;top:919px;width:96px;height:28px;line-height:25px;">0,000000</div>
<div class="f r " style="left:921px;top:919px;width:86px;height:28px;line-height:25px;">0,0000</div>
<div class="f r " style="left:1011px;top:919px;width:107px;height:28px;line-height:25px;">0,000000</div>
<div class="h" style="left:732px;top:949px;">Acréscimo Custo</div>
<div class="gl" style="left:880px;top:958px;width:237px"></div>
<div class="l lr " style="left:420px;width:400px;top:973px;">% Acrés.:</div>
<div class="f r " style="left:821px;top:968px;width:96px;height:28px;line-height:25px;">0,0000</div>
<div class="l lr " style="left:609px;width:400px;top:973px;">Vlr. Acrés.:</div>
<div class="f r " style="left:1011px;top:968px;width:107px;height:28px;line-height:25px;">0,0000</div>
<div class="h" style="left:732px;top:997px;">Bonificação</div>
<div class="gl" style="left:836px;top:1006px;width:107px"></div>
<div class="f b " style="left:921px;top:1017px;width:86px;height:28px;line-height:25px;"></div>
<div class="f b " style="left:1011px;top:1017px;width:107px;height:28px;line-height:25px;"></div>
<div class="h" style="left:1126px;top:218px;">Descontos financeiro</div>
<div class="gl" style="left:1317px;top:222px;width:196px"></div>
<div class="l lr " style="left:913px;width:400px;top:246px;">Conta pagar:</div>
<div class="f r " style="left:1315px;top:240px;width:86px;height:28px;line-height:25px;">0,0000</div>
<div class="f r " style="left:1405px;top:240px;width:108px;height:28px;line-height:25px;">0,000000</div>
<div class="l lr " style="left:913px;width:400px;top:276px;">Produtor rural:</div>
<div class="f r " style="left:1315px;top:271px;width:86px;height:28px;line-height:25px;">0,0000</div>
<div class="h" style="left:1126px;top:299px;">Embalagem</div>
<div class="gl" style="left:1235px;top:308px;width:280px"></div>
<div class="l lr " style="left:1012px;width:400px;top:318px;">Qt.Unit.CX:</div>
<div class="f b " style="left:1414px;top:312px;width:101px;height:28px;line-height:25px;">1,000000</div>
<div class="l lr " style="left:1012px;width:400px;top:348px;">Peso Líq.:</div>
<div class="f b " style="left:1414px;top:342px;width:101px;height:28px;line-height:25px;">7,100000</div>
<div class="l lr " style="left:1012px;width:400px;top:378px;">Peso bruto:</div>
<div class="f b " style="left:1414px;top:372px;width:101px;height:28px;line-height:25px;">7,500000</div>
<div class="h" style="left:1126px;top:402px;">Quantidades</div>
<div class="gl" style="left:1243px;top:411px;width:272px"></div>
<div class="l lr " style="left:1012px;width:400px;top:422px;">Qtde: (CX)</div>
<div class="f b r " style="left:1414px;top:416px;width:101px;height:28px;line-height:25px;">1,000000</div>
<div class="l lr " style="left:1009px;width:400px;top:482px;">Qtde. Unid. Venda:</div>
<div class="f b r " style="left:1414px;top:476px;width:101px;height:28px;line-height:25px;">1,000000</div>
<div class="l lr " style="left:946px;width:400px;top:542px;">Preço merc. x Qtd.pedida:</div>
<div class="f b " style="left:1351px;top:536px;width:164px;height:28px;line-height:25px;">213,151358</div>
<div class="l lr " style="left:946px;width:400px;top:569px;">Preço liq. x Qtd.pedida:</div>
<div class="f b " style="left:1351px;top:566px;width:164px;height:28px;line-height:25px;">167,230000</div>
<div class="l lr " style="left:946px;width:400px;top:599px;">Preço compra x Qtd.pedida:</div>
<div class="f b " style="left:1351px;top:596px;width:164px;height:28px;line-height:25px;">167,230000</div>
<div class="h" style="left:1126px;top:624px;">BCR</div>
<div class="gl" style="left:1167px;top:633px;width:348px"></div>
<div class="bt " style="left:1408px;top:638px;width:107px;height:28px;line-height:26px;background:#cccccc;border-color:#bfbfbf;color:#8a8a8a">Calcular</div>
<div class="l lr " style="left:819px;width:400px;top:674px;">ICMS:</div>
<div class="f b " style="left:1220px;top:668px;width:97px;height:28px;line-height:25px;">0,000000</div>
<div class="f b " style="left:1420px;top:668px;width:97px;height:28px;line-height:25px;">0,000000</div>
<div class="l lr " style="left:819px;width:400px;top:704px;">ST BCR:</div>
<div class="f b " style="left:1220px;top:698px;width:97px;height:28px;line-height:25px;">0,000000</div>
<div class="f b " style="left:1420px;top:698px;width:97px;height:28px;line-height:25px;">0,000000</div>
<div class="l lr " style="left:819px;width:400px;top:734px;">FCP ST BCR:</div>
<div class="f r " style="left:1220px;top:728px;width:97px;height:28px;line-height:25px;">0,000000</div>
<div class="f r " style="left:1320px;top:728px;width:96px;height:28px;line-height:25px;">5,0000</div>
<div class="f r " style="left:1420px;top:728px;width:97px;height:28px;line-height:25px;">0,000000</div>
<div class="h" style="left:1126px;top:758px;">Dados fiscais</div>
<div class="gl" style="left:1243px;top:767px;width:272px"></div>
<div class="l lr " style="left:822px;width:400px;top:783px;">CFOP:</div>
<div class="f " style="left:1226px;top:778px;width:72px;height:28px;line-height:25px;">2102</div>
<div class="bt " style="left:1302px;top:778px;width:33px;height:28px;line-height:26px;"><span style="letter-spacing:1.5px;position:relative;top:2px;left:1px">...</span></div>
<div class="l " style="left:1342px;top:783px;">Sit.Trib.:</div>
<div class="f " style="left:1408px;top:778px;width:70px;height:28px;line-height:25px;">10</div>
<div class="bt " style="left:1481px;top:778px;width:34px;height:28px;line-height:26px;"><span style="letter-spacing:1.5px;position:relative;top:2px;left:1px">...</span></div>
<div class="l lr " style="left:822px;width:400px;top:813px;">Orig.Merc.:</div>
<div class="f " style="left:1226px;top:807px;width:72px;height:28px;line-height:25px;color:#8c8c8c">Orig.Merc</div>
<div class="bt " style="left:1302px;top:807px;width:33px;height:28px;line-height:26px;"><span style="letter-spacing:1.5px;position:relative;top:2px;left:1px">...</span></div>
<div class="l " style="left:1126px;top:845px;letter-spacing:.72px">CST.PIS/COFINS:</div>
<div class="f " style="left:1256px;top:841px;width:256px;height:26px;line-height:23px;padding-left:4px">50 - Operação com Direito a Cr</div>
<div class="dd " style="left:1487px;top:843px;width:23px;height:22px"><i></i></div>
<div class="h" style="left:1126px;top:871px;">Custo última entrada previsto</div>
<div class="gl" style="left:1388px;top:880px;width:127px"></div>
<div class="l lr " style="left:824px;width:400px;top:898px;"><span class="u">Valor:</span></div>
<div class="f b " style="left:1225px;top:892px;width:102px;height:28px;line-height:25px;">213,151358</div>
<div class="l " style="left:1357px;top:898px;letter-spacing:.4px"><span class="u">Custo:</span></div>
<div class="f b " style="left:1413px;top:892px;width:102px;height:28px;line-height:25px;">213,151358</div>
</body></html>
